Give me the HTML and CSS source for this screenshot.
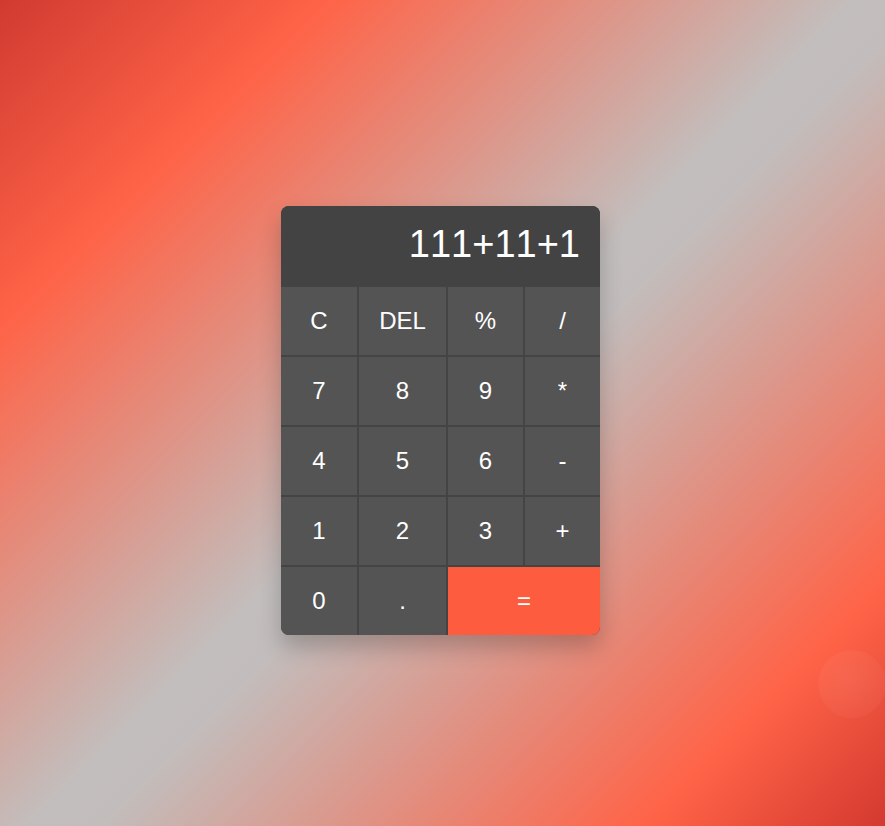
FILE: index.html
```html
<!DOCTYPE html>
<html lang="en">
<head>
<meta charset="utf-8">
<title>Calculator</title>
<link rel="stylesheet" href="styles.css">
</head>
<body>
<main class="stage">
  <div class="calculator">
    <div class="display">111+11+1</div>
    <div class="keys">
      <button class="key">C</button>
      <button class="key">DEL</button>
      <button class="key">%</button>
      <button class="key">/</button>
      <button class="key">7</button>
      <button class="key">8</button>
      <button class="key">9</button>
      <button class="key">*</button>
      <button class="key">4</button>
      <button class="key">5</button>
      <button class="key">6</button>
      <button class="key">-</button>
      <button class="key">1</button>
      <button class="key">2</button>
      <button class="key">3</button>
      <button class="key">+</button>
      <button class="key">0</button>
      <button class="key">.</button>
      <button class="key key-equal">=</button>
    </div>
  </div>
</main>
<div class="ripple"></div>
</body>
</html>
```
FILE: styles.css
```css
html, body {
  margin: 0;
  height: 100%;
}

body {
  font-family: "Liberation Sans", Arial, sans-serif;
  font-kerning: none;
  background: linear-gradient(135deg,
    #d03b31 0%,
    #ff6347 19%,
    #c2bebd 50%,
    #c2bdbc 54%,
    #ff6347 86%,
    #d3392f 100%);
  overflow: hidden;
  position: relative;
}

.stage {
  height: 100%;
  box-sizing: border-box;
  padding: 15px 4px 0 0;
  display: flex;
  justify-content: center;
  align-items: center;
}

.calculator {
  width: 319px;
  background: #444444;
  border-radius: 8px;
  overflow: hidden;
  box-shadow: 0 12px 22px rgba(0, 0, 0, 0.22);
}

.display {
  height: 80px;
  box-sizing: border-box;
  padding: 18px 20px 0;
  margin-bottom: 1px;
  background: #434343;
  color: #ffffff;
  font-size: 38px;
  line-height: 40px;
  text-align: right;
  font-kerning: none;
}

.keys {
  display: grid;
  grid-template-columns: 76px 87px 75px 75px;
  grid-auto-rows: 68px;
  gap: 2px;
}

.key {
  border: none;
  margin: 0;
  padding: 0;
  background: #545454;
  color: #ffffff;
  font-family: "Liberation Sans", Arial, sans-serif;
  font-kerning: none;
  font-size: 24px;
  display: flex;
  align-items: center;
  justify-content: center;
}

.key-equal {
  grid-column: span 2;
  background: #fd5c3f;
}

.ripple {
  position: absolute;
  left: 818px;
  top: 650px;
  width: 68px;
  height: 68px;
  border-radius: 50%;
  background: radial-gradient(circle at 45% 45%, rgba(255, 255, 255, 0.07) 0%, rgba(255, 255, 255, 0.03) 72%, rgba(255, 255, 255, 0.18) 90%, rgba(255, 255, 255, 0) 100%);
}
```
